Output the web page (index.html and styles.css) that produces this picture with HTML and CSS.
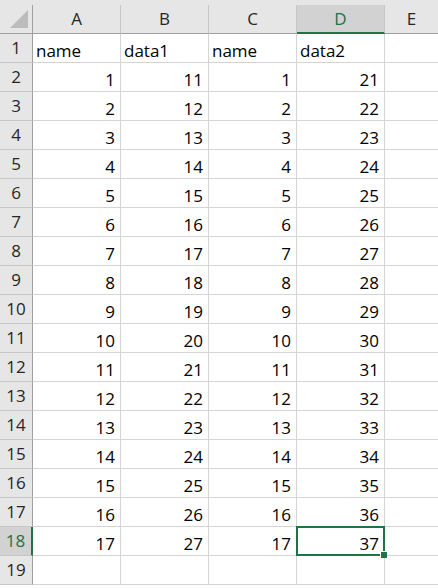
FILE: index.html
```html
<!DOCTYPE html>
<html lang="en">

<head>
    <meta charset="UTF-8">
    <meta name="viewport" content="width=device-width, initial-scale=1.0">
    <title>Sheet1</title>
    <link rel="stylesheet" href="styles.css">
</head>

<body>
    <div class="sheet">
        <div class="head-row">
            <div class="corner">
                <svg width="32" height="28" viewBox="0 0 32 28">
                    <polygon points="28,5 28,23 10,23" fill="#bcbcbc" />
                </svg>
            </div>
            <div class="col-h">A</div>
            <div class="col-h">B</div>
            <div class="col-h">C</div>
            <div class="col-h selected">D</div>
            <div class="col-h last">E</div>
        </div>
        <div id="rows">
            <!--dynamically stored-->
        </div>
        <div class="active-cell"><span class="fill-handle"></span></div>
    </div>

    <script>
        function renderRows() {
            var rows = document.getElementById('rows');
            var data = [['name', 'data1', 'name', 'data2']];

            for (var i = 1; i <= 17; i++) {
                data.push([i, 10 + i, i, 20 + i]);
            }
            data.push(['', '', '', '']);

            data.forEach(function (item, index) {
                var sel = index + 1 === 18 ? ' selected' : '';
                var html = `<div class="row">
                            <div class="row-h${sel}">${index + 1}</div>`;
                item.forEach(function (value) {
                    var cls = typeof value === 'number' ? 'cell num' : 'cell';
                    html += `<div class="${cls}">${value}</div>`;
                });
                html += `<div class="cell last"></div></div>`;
                rows.insertAdjacentHTML('beforeend', html);
            });
        }

        renderRows();
    </script>
</body>

</html>
```

FILE: styles.css
```css
body {
    margin: 0;
    background-color: #ffffff;
    font-family: "Open Sans", "Noto Sans", sans-serif;
    font-size: 17px;
    color: #000000;
}

.sheet {
    position: relative;
    width: 438px;
    height: 588px;
    overflow: hidden;
}

.head-row {
    display: flex;
    height: 34px;
    padding-top: 5px;
    box-sizing: border-box;
    background-color: #e6e6e6;
}

.corner,
.col-h {
    flex: none;
    height: 29px;
    box-sizing: border-box;
    border-bottom: 1px solid #a0a0a0;
}

.corner {
    width: 33px;
    border-right: 1px solid #a0a0a0;
}

.corner svg {
    display: block;
}

.col-h {
    width: 88px;
    border-right: 1px solid #c6c6c6;
    text-align: center;
    line-height: 28px;
    color: #262626;
}

.col-h.last {
    flex: 1;
    border-right: none;
}

.col-h.selected {
    background-color: #d2d2d2;
    border-bottom: 2px solid #217346;
    color: #217346;
}

.row {
    display: flex;
    height: 29px;
}

.row-h {
    flex: none;
    width: 33px;
    box-sizing: border-box;
    background-color: #e6e6e6;
    border-right: 1px solid #a0a0a0;
    border-bottom: 1px solid #c6c6c6;
    text-align: center;
    line-height: 28px;
    color: #262626;
}

.row-h.selected {
    background-color: #d2d2d2;
    border-right: 2px solid #217346;
    color: #217346;
}

.cell {
    flex: none;
    width: 88px;
    box-sizing: border-box;
    padding: 6px 5px 0 3px;
    border-right: 1px solid #d4d4d4;
    border-bottom: 1px solid #d4d4d4;
    line-height: 22px;
    white-space: nowrap;
}

.cell.num {
    text-align: right;
}

.cell.last {
    flex: 1;
    border-right: none;
}

.active-cell {
    position: absolute;
    left: 296px;
    top: 526px;
    width: 89px;
    height: 30px;
    box-sizing: border-box;
    border: 2px solid #217346;
}

.fill-handle {
    position: absolute;
    right: -4px;
    bottom: -4px;
    width: 6px;
    height: 6px;
    background-color: #217346;
    border-left: 1px solid #ffffff;
    border-top: 1px solid #ffffff;
}
```
